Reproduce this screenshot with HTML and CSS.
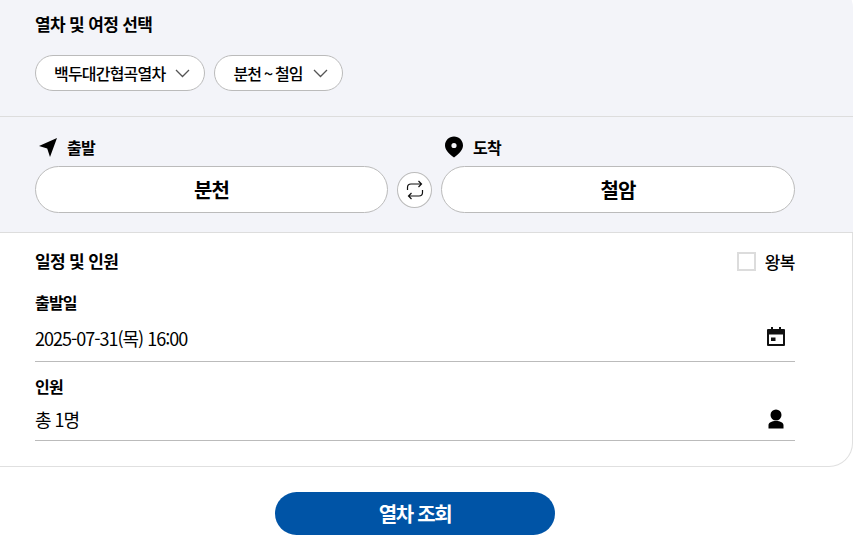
FILE: index.html
```html
<!DOCTYPE html>
<html lang="ko">
<head>
<meta charset="utf-8">
<title>열차 조회</title>
<link rel="stylesheet" href="styles.css">
</head>
<body>
<main class="page">
  <div class="card">
    <section class="top">
      <div class="pick">
        <h2 class="title">열차 및 여정 선택</h2>
        <div class="pills">
          <button class="pill">백두대간협곡열차<svg class="chev" viewBox="0 0 15 9"><path d="M1 1l6.500 6.500L14 1" fill="none" stroke="#555" stroke-width="1.300"/></svg></button>
          <button class="pill">분천 ~ 철임<svg class="chev" viewBox="0 0 15 9"><path d="M1 1l6.500 6.500L14 1" fill="none" stroke="#555" stroke-width="1.300"/></svg></button>
        </div>
      </div>
      <div class="route">
        <div class="stop stop-from">
          <div class="stop-label"><svg class="ico" viewBox="0 0 24 24"><path d="M21 3 3 11l8.200 2.600L14 22z" fill="#000"/></svg>출발</div>
          <button class="station">분천</button>
        </div>
        <button class="swap"><svg viewBox="0 0 20 20"><path d="M13.500 1 16.500 4l-3 3M16.500 4H6A3.500 3.500 0 0 0 2.500 7.500V10M6.500 13 3.500 16l3 3M3.500 16H14a3.500 3.500 0 0 0 3.500-3.500V10" fill="none" stroke="#111" stroke-width="1.200"/></svg></button>
        <div class="stop">
          <div class="stop-label"><svg class="ico" viewBox="0 0 24 24"><path fill-rule="evenodd" d="M12 1.500c5 0 9 3.900 9 8.900 0 4-3.400 7.800-9 12.100-5.600-4.300-9-8.100-9-12.100 0-5 4-8.900 9-8.900zm0 6.400a2.600 2.600 0 1 0 0 5.200 2.600 2.600 0 0 0 0-5.200z" fill="#000"/></svg>도착</div>
          <button class="station">철암</button>
        </div>
      </div>
    </section>
    <section class="bottom">
      <div class="sched-head">
        <h2 class="title">일정 및 인원</h2>
        <label class="round"><span class="check"></span>왕복</label>
      </div>
      <div class="field">
        <div class="field-label">출발일</div>
        <div class="field-row">2025-07-31(목) 16:00<svg class="field-ico ico-cal" viewBox="0 0 24 24"><path fill-rule="evenodd" d="M7 2h2v2h6V2h2v2h3a1 1 0 0 1 1 1v15a1 1 0 0 1-1 1H4a1 1 0 0 1-1-1V5a1 1 0 0 1 1-1h3zM5 9.500V19h14V9.500zm2 3h4.500V16H7z" fill="#111"/></svg></div>
      </div>
      <div class="field field-people">
        <div class="field-label">인원</div>
        <div class="field-row">총 1명<svg class="field-ico" viewBox="0 0 24 24"><path d="M12 2.500a5.500 5.500 0 1 1 0 11 5.500 5.500 0 0 1 0-11zM12 14c4.500 0 7.500 1.700 7.500 4.200V21.500h-15v-3.300C4.500 15.700 7.500 14 12 14z" fill="#000"/></svg></div>
      </div>
    </section>
  </div>
  <div class="submit-wrap"><button class="submit">열차 조회</button></div>
</main>
</body>
</html>
```
FILE: styles.css
```css
* { box-sizing: border-box; }
html, body { margin: 0; height: 100%; background: #fff; overflow: hidden; }
body { font-family: "Noto Sans CJK KR", "Noto Sans", sans-serif; color: #000; }
button { font-family: inherit; color: inherit; padding: 0; cursor: pointer; }
.card { margin-top: -16px; border-radius: 0 24px 0 0; overflow: hidden; }
.top { background: #f3f4f9; height: 249px; border-bottom: 1px solid #dddddd; }
.pick { height: 133px; padding: 28px 35px 0; border-bottom: 1px solid #dddddd; }
.title { margin: 0; font-size: 17px; line-height: 24px; font-weight: 700; letter-spacing: -0.65px; }
.pills { display: flex; gap: 9px; margin-top: 19px; }
.pill { height: 36px; display: flex; align-items: center; gap: 10px; padding: 0 14px 0 18px; background: #fff; border: 1px solid #bbb; border-radius: 18px; font-size: 16px; font-weight: 500; letter-spacing: -0.8px; word-spacing: -1px; }
.chev { width: 15px; height: 9px; }
.route { display: flex; align-items: flex-end; padding: 0 58px 0 35px; gap: 9px; }
.stop { flex: 1; }
.stop-from { flex: 0 0 353px; }
.stop-label { display: flex; align-items: center; gap: 7px; height: 49px; padding: 10px 0 0 1px; font-size: 16px; font-weight: 700; letter-spacing: -0.8px; }
.ico { width: 24px; height: 24px; }
.station { width: 100%; height: 47px; background: #fff; border: 1px solid #bbb; border-radius: 24px; font-size: 20px; font-weight: 700; letter-spacing: -1px; }
.swap { flex: none; width: 35px; height: 36px; margin-bottom: 5px; background: #fff; border: 1px solid #bbb; border-radius: 50%; display: flex; align-items: center; justify-content: center; }
.swap svg { width: 20px; height: 20px; }
.bottom { height: 234px; padding: 16px 57px 0 35px; background: #fff; border-right: 1px solid #e0e0e0; border-bottom: 1px solid #e0e0e0; border-radius: 0 0 24px 0; }
.sched-head { display: flex; align-items: center; justify-content: space-between; height: 24px; }
.round { display: flex; align-items: center; gap: 9px; font-size: 17px; font-weight: 500; letter-spacing: -0.5px; }
.check { width: 19px; height: 19px; background: #fff; border: 2px solid #dcdcdc; }
.field { margin-top: 19px; }
.field-people { margin-top: 14px; }
.field-label { font-size: 16px; line-height: 20px; font-weight: 700; letter-spacing: -0.8px; }
.field-row { display: flex; align-items: center; justify-content: space-between; height: 50px; padding: 2px 7px 0 0; border-bottom: 1px solid #bbb; font-size: 18px; letter-spacing: -1px; }
.field-people .field-row { height: 45px; }
.field-ico { width: 24px; height: 24px; }
.ico-cal { margin-top: -2px; }
.submit-wrap { display: flex; justify-content: center; padding: 25px 58px 0 35px; }
.submit { width: 280px; height: 43px; background: #0054a6; border: 0; border-radius: 22px; color: #fff; font-size: 20px; font-weight: 700; letter-spacing: -1.3px; }
```
